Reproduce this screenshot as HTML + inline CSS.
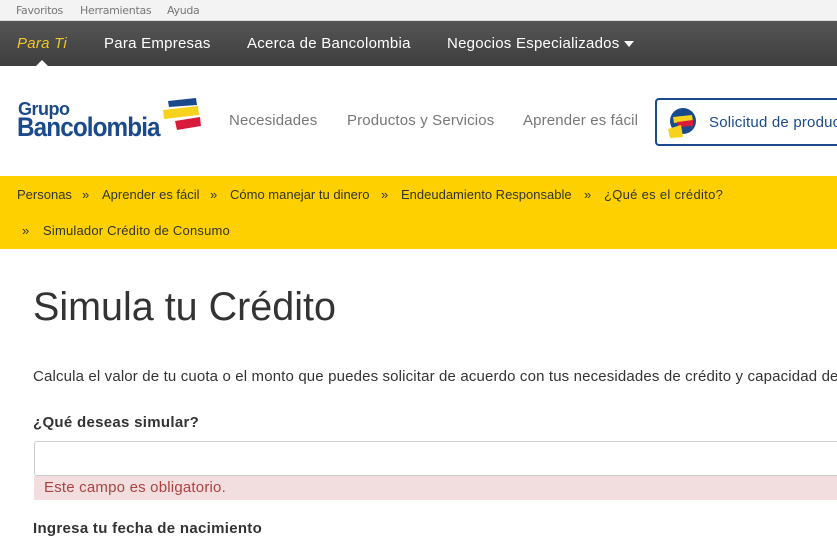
<!DOCTYPE html>
<html><head><meta charset="utf-8"><style>
*{margin:0;padding:0;box-sizing:border-box}
body{width:837px;height:537px;overflow:hidden;background:#fff;font-family:"Liberation Sans",sans-serif;position:relative}
.a{position:absolute;white-space:nowrap}
.n{font-size:15px;color:#fff;letter-spacing:0.25px;top:35px}
.b{font-size:13px;color:#333;top:187px}
</style></head><body>
<div class="a" style="left:0;top:0;width:837px;height:21px;background:#f3f3f3;border-bottom:1px solid #ddd"></div>
<div class="a" style="left:16px;top:4px;font-size:11px;color:#777;font-family:'DejaVu Sans',sans-serif;letter-spacing:-0.3px">Favoritos</div>
<div class="a" style="left:80px;top:4px;font-size:11px;color:#777;font-family:'DejaVu Sans',sans-serif;letter-spacing:-0.3px">Herramientas</div>
<div class="a" style="left:167px;top:4px;font-size:11px;color:#777;font-family:'DejaVu Sans',sans-serif;letter-spacing:-0.3px">Ayuda</div>
<div class="a" style="left:0;top:21px;width:837px;height:45px;background:linear-gradient(#555,#3e3e3e)"></div>
<div class="a n" style="left:17px;color:#f3c623;font-style:italic">Para Ti</div>
<div class="a" style="left:36px;top:60px;width:0;height:0;border-left:6px solid transparent;border-right:6px solid transparent;border-bottom:6px solid #fff"></div>
<div class="a n" style="left:104px">Para Empresas</div>
<div class="a n" style="left:247px">Acerca de Bancolombia</div>
<div class="a n" style="left:447px">Negocios Especializados</div>
<div class="a" style="left:624px;top:41px;width:0;height:0;border-left:5px solid transparent;border-right:5px solid transparent;border-top:6px solid #fff"></div>
<div class="a" style="left:18px;top:99px;font-size:18px;font-weight:bold;color:#1a4a8c;letter-spacing:-0.5px">Grupo</div>
<div class="a" style="left:17px;top:112px;font-size:27px;font-weight:bold;color:#1a4a8c;letter-spacing:-1px;transform:scaleX(0.9);transform-origin:left">Bancolombia</div>
<svg class="a" style="left:162px;top:98px" width="40" height="42"><path d="M6 3 L34 0 L35 7 L7 9Z" fill="#1a4a8c"/><path d="M1 12 L36 8 L37 17 L2 21Z" fill="#f6d21c"/><path d="M13 23 L38 19 L39 28 L15 32Z" fill="#d81b3a"/></svg>
<div class="a" style="left:229px;top:112px;font-size:15px;color:#777;letter-spacing:0.15px">Necesidades</div>
<div class="a" style="left:347px;top:112px;font-size:15px;color:#777;letter-spacing:0.15px">Productos y Servicios</div>
<div class="a" style="left:523px;top:112px;font-size:15px;color:#777;letter-spacing:0.15px">Aprender es fácil</div>
<div class="a" style="left:655px;top:98px;width:200px;height:48px;border:2px solid #1a4a8c;border-radius:4px"></div>
<svg class="a" style="left:667px;top:107px" width="32" height="32"><circle cx="16" cy="14" r="13" fill="#1a4a8c"/><path d="M6 10 L25 8 L26 14 L7 16Z" fill="#f6d21c"/><path d="M10 15 L26 13 L26 19 L11 20Z" fill="#d81b3a"/><path d="M1 22 L14 18 L16 30 L3 31Z" fill="#f6d21c"/></svg>
<div class="a" style="left:709px;top:114px;font-size:15px;color:#1a4a8c;letter-spacing:0.2px">Solicitud de productos</div>
<div class="a" style="left:0;top:176px;width:837px;height:73px;background:#fed000"></div>
<div class="a b" style="left:17px">Personas</div>
<div class="a b" style="left:82px">»</div>
<div class="a b" style="left:102px">Aprender es fácil</div>
<div class="a b" style="left:210px">»</div>
<div class="a b" style="left:230px">Cómo manejar tu dinero</div>
<div class="a b" style="left:381px">»</div>
<div class="a b" style="left:401px">Endeudamiento Responsable</div>
<div class="a b" style="left:584px">»</div>
<div class="a b" style="left:604px;letter-spacing:0.3px">¿Qué es el crédito?</div>
<div class="a b" style="left:22px;top:223px">»</div>
<div class="a b" style="left:43px;top:223px;letter-spacing:0.2px">Simulador Crédito de Consumo</div>
<div class="a" style="left:33px;top:285px;font-size:39.5px;color:#333">Simula tu Crédito</div>
<div class="a" style="left:33px;top:368px;font-size:15px;color:#333;letter-spacing:0.15px">Calcula el valor de tu cuota o el monto que puedes solicitar de acuerdo con tus necesidades de crédito y capacidad de pago.</div>
<div class="a" style="left:33px;top:414px;font-size:15px;font-weight:bold;color:#333;letter-spacing:0.3px">¿Qué deseas simular?</div>
<div class="a" style="left:34px;top:441px;width:820px;height:35px;border:1px solid #ccc;border-radius:3px;background:#fff"></div>
<div class="a" style="left:34px;top:476px;width:820px;height:24px;background:#f2dede"></div>
<div class="a" style="left:44px;top:479px;font-size:15px;color:#a94442;letter-spacing:0.2px">Este campo es obligatorio.</div>
<div class="a" style="left:33px;top:520px;font-size:15px;font-weight:bold;color:#333;letter-spacing:0.3px">Ingresa tu fecha de nacimiento</div>
</body></html>
